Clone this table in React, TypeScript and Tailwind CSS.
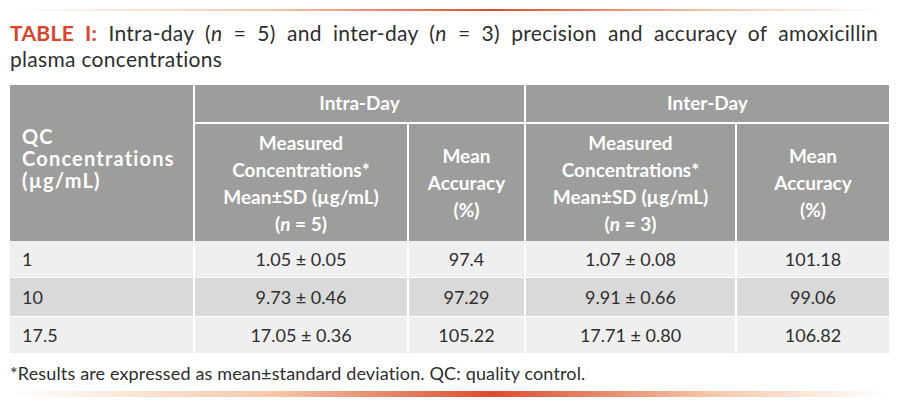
const rows = [
  ["1", "1.05 ± 0.05", "97.4", "1.07 ± 0.08", "101.18"],
  ["10", "9.73 ± 0.46", "97.29", "9.91 ± 0.66", "99.06"],
  ["17.5", "17.05 ± 0.36", "105.22", "17.71 ± 0.80", "106.82"],
];

const cols = "grid grid-cols-[183px_212px_115px_209px_152px] gap-x-[2px]";
const line =
  "bg-[linear-gradient(to_right,rgba(255,255,255,0),#f5c7a8_30%,#dc4a2f_55%,#f5c7a8_80%,rgba(255,255,255,0))]";

export default function App() {
  return (
    <div className="w-[904px] h-[406px] bg-white text-[#2e2e2e] font-['Lato',sans-serif] pt-[9px]">
      <div className={`ml-[10px] w-[876px] h-[2px] ${line}`} />
      <div className="ml-[10px] w-[868px] mt-[9px] text-[21px] leading-[26px] tracking-[0.3px]">
        <p className="text-justify [text-align-last:justify]">
          <span className="font-bold text-[#d9452b]">TABLE I:</span> Intra-day (<i>n</i> = 5) and inter-day (<i>n</i> = 3) precision and accuracy of amoxicillin
        </p>
        <p>plasma concentrations</p>
      </div>
      <div className="ml-[10px] mt-[13px] w-[879px]">
        <div className={`${cols} grid-rows-[37px_117px] gap-y-[2px] text-white font-bold text-[19px]`}>
          <div className="row-span-2 bg-[#9d9d9c] flex flex-col justify-center px-[12px] pb-[10px] leading-[22px] text-[20px] tracking-[1.2px]">
            <span>QC</span>
            <span>Concentrations</span>
            <span>(µg/mL)</span>
          </div>
          <div className="col-span-2 bg-[#9d9d9c] flex items-center justify-center">Intra-Day</div>
          <div className="col-span-2 bg-[#9d9d9c] flex items-center justify-center">Inter-Day</div>
          <div className="bg-[#9d9d9c] flex flex-col justify-center items-center text-center leading-[27px]">
            <span>Measured</span>
            <span>Concentrations*</span>
            <span>Mean±SD (µg/mL)</span>
            <span>(<i>n</i> = 5)</span>
          </div>
          <div className="bg-[#9d9d9c] flex flex-col justify-center items-center text-center leading-[27px]">
            <span>Mean</span>
            <span>Accuracy</span>
            <span>(%)</span>
          </div>
          <div className="bg-[#9d9d9c] flex flex-col justify-center items-center text-center leading-[27px]">
            <span>Measured</span>
            <span>Concentrations*</span>
            <span>Mean±SD (µg/mL)</span>
            <span>(<i>n</i> = 3)</span>
          </div>
          <div className="bg-[#9d9d9c] flex flex-col justify-center items-center text-center leading-[27px]">
            <span>Mean</span>
            <span>Accuracy</span>
            <span>(%)</span>
          </div>
        </div>
        {rows.map((r, i) => (
          <div
            key={i}
            className={`${cols} ${i === 0 ? "h-[36px]" : i === 1 ? "h-[38px] mt-[1px]" : "h-[36px] mt-[1px]"} text-[18px]`}
          >
            {r.map((c, j) => (
              <div
                key={j}
                className={`flex items-center ${i === 1 ? "bg-[#d9d9d9]" : "bg-[#efefef]"} ${j === 0 ? "px-[12px]" : "justify-center"}`}
              >
                {c}
              </div>
            ))}
          </div>
        ))}
      </div>
      <p className="ml-[10px] mt-[10px] text-[18px] leading-[20px] tracking-[0.15px]">
        *Results are expressed as mean±standard deviation. QC: quality control.
      </p>
      <div className={`ml-[10px] mt-[8px] w-[876px] h-[6px] ${line}`} />
    </div>
  );
}
